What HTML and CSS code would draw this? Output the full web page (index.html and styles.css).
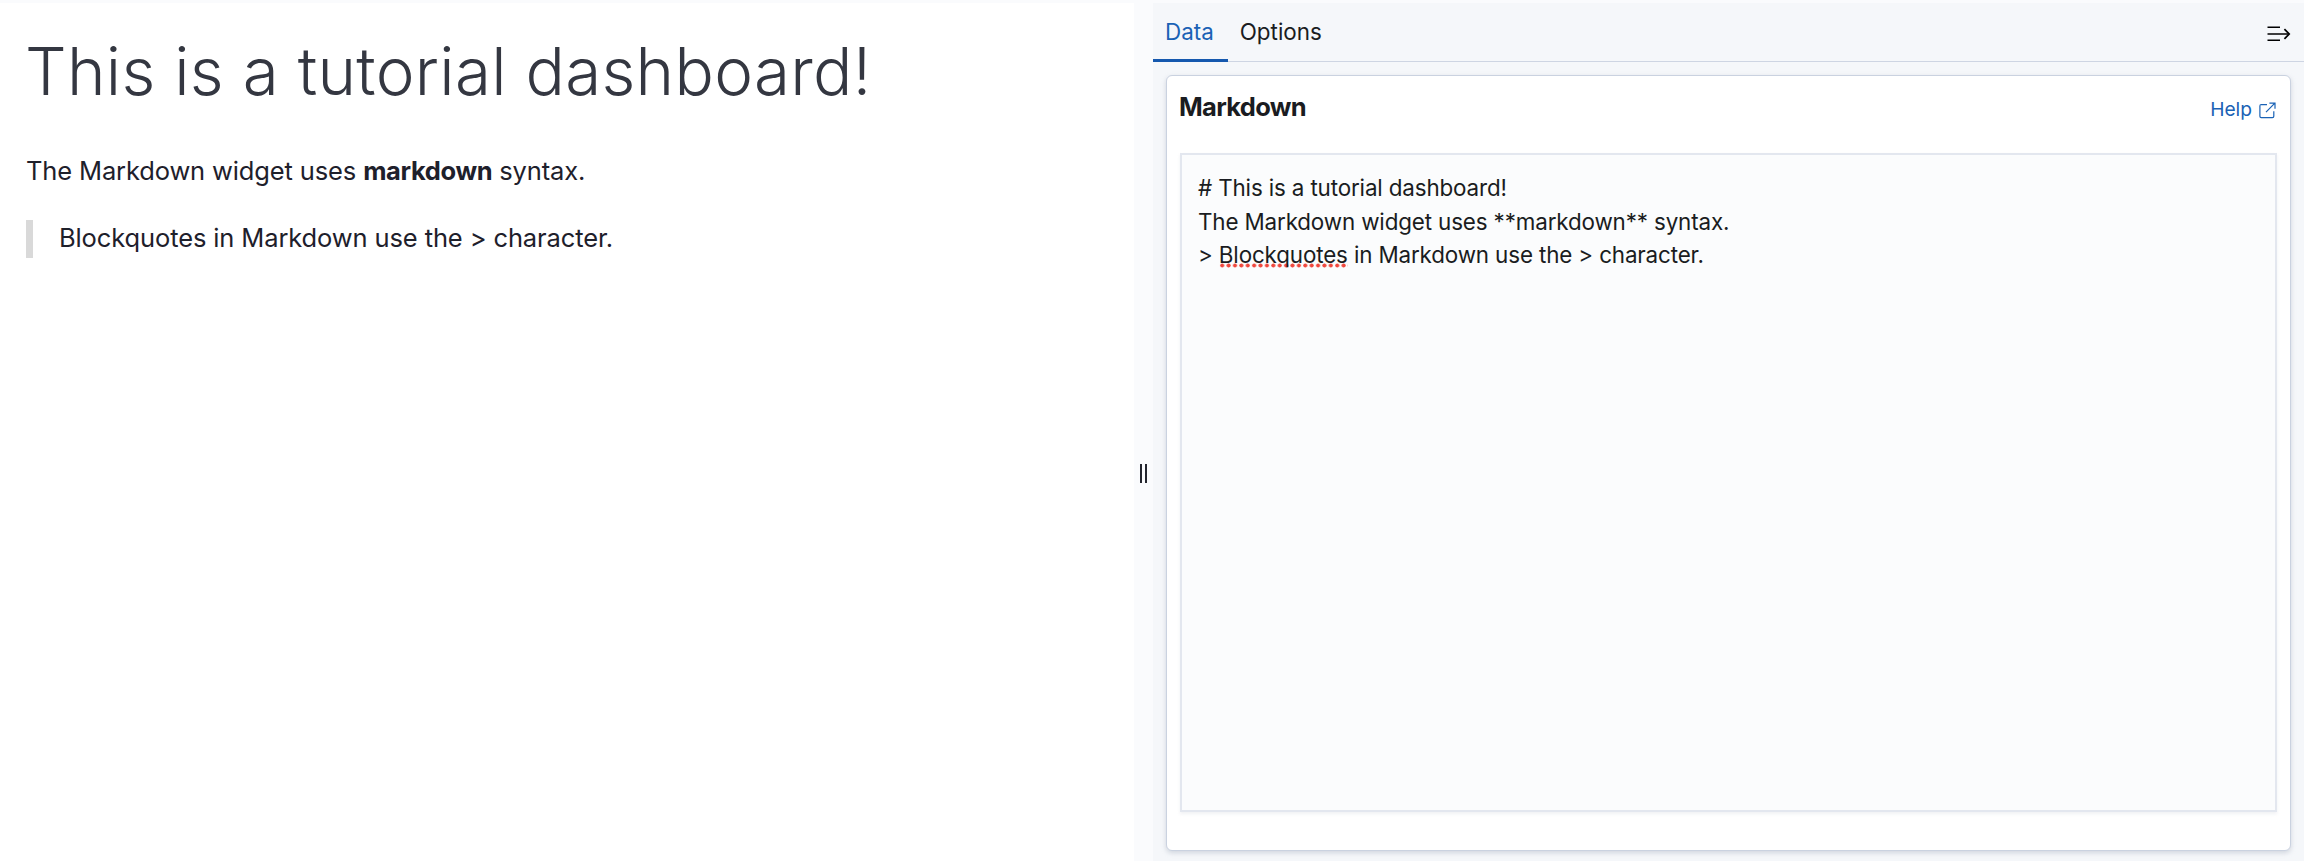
FILE: index.html
```html
<!DOCTYPE html>
<html lang="en">
<head>
<meta charset="utf-8">
<title>Markdown</title>
<link rel="stylesheet" href="styles.css">
</head>
<body>
<div class="editor">
  <main class="preview">
    <h1 class="preview-title">This is a tutorial dashboard!</h1>
    <p class="preview-text">The Markdown widget uses <strong>markdown</strong> syntax.</p>
    <blockquote class="preview-quote">Blockquotes in Markdown use the &gt; character.</blockquote>
  </main>
  <div class="resizer"><span class="grip"></span></div>
  <aside class="sidebar">
    <nav class="tabs">
      <a class="tab tab-active">Data</a>
      <a class="tab">Options</a>
      <svg class="collapse" width="24" height="18" viewBox="0 0 24 18" fill="none" stroke="#000" stroke-width="1.4"><path d="M.5 2.3h12.5M.5 9h21M.5 15.3h12.5" /><path d="M17.4 4.2 22.2 9l-4.8 4.8" stroke-width="1.7"/></svg>
    </nav>
    <section class="panel">
      <header class="panel-head">
        <h2 class="panel-title">Markdown</h2>
        <a class="help">Help
          <svg class="popout" width="17" height="17" viewBox="0 0 17 17" fill="none" stroke="#1a62b5" stroke-width="1.2"><path d="M8 2.6H2.2Q.9 2.6.9 3.9v10.3q0 1.4 1.3 1.4h11.2q1.4 0 1.4-1.4V9.2M7 10.2 15.6 1.4M10.4 1.1H16v5.6"/></svg>
        </a>
      </header>
      <div class="source"><div># This is a tutorial dashboard!</div><div>The Markdown widget uses **markdown** syntax.</div><div>&gt; <span class="misspelled">Blockquotes</span> in Markdown use the &gt; character.</div></div>
    </section>
  </aside>
</div>
</body>
</html>
```
FILE: styles.css
```css
* { box-sizing: border-box; }
body {
  margin: 0;
  background: #fafbfd;
  color: #1a1c21;
  font-family: Inter, "Liberation Sans", sans-serif;
}
.editor {
  display: grid;
  grid-template-columns: 1134px 19px 1fr;
  height: 861px;
  padding-top: 3px;
}
.preview {
  background: #fff;
  color: #343741;
  padding: 26px;
}
.preview-title {
  margin: 0 0 0 -1px;
  font-size: 65.5px;
  line-height: 86px;
  font-weight: 300;
  letter-spacing: .3px;
  white-space: nowrap;
}
.preview-text {
  margin: 37px 0 0;
  font-size: 25.5px;
  line-height: 38px;
  letter-spacing: -.14px;
  color: #1e202b;
}
.preview-text strong {
  font-weight: 700;
  letter-spacing: -.36px;
}
.preview-quote {
  margin: 30px 0 0;
  border-left: 7px solid #d9d9d9;
  padding: 0 0 2px 26px;
  font-size: 25.5px;
  line-height: 36px;
  letter-spacing: -.12px;
  color: #1e202b;
}
.resizer {
  display: flex;
  padding: 461px 0 0 6px;
}
.grip {
  width: 7px;
  height: 19px;
  border: solid #23252e;
  border-width: 0 2px;
}
.sidebar {
  display: flex;
  flex-direction: column;
  background: #f5f7fa;
  padding-bottom: 10px;
}
.tabs {
  display: flex;
  height: 59px;
  border-bottom: 1px solid #ced5e3;
}
.tab {
  height: 59px;
  padding: 0 13px 0 12px;
  font-size: 22.4px;
  line-height: 58px;
}
.tab-active {
  padding-right: 14px;
  color: #1a62b5;
  border-bottom: 3px solid #1558ae;
}
.collapse { margin: 22px 13px 0 auto; }
.panel {
  flex: 1;
  display: flex;
  flex-direction: column;
  margin: 13px 13px 0;
  padding: 13px 13px 38px;
  background: #fff;
  border: 1px solid #cad2e0;
  border-radius: 6px;
  box-shadow: 0 2px 5px rgba(152, 162, 179, .4);
}
.panel-head {
  display: flex;
  justify-content: space-between;
  height: 64px;
}
.panel-title {
  margin: 0 0 0 -1px;
  font-size: 25.5px;
  line-height: 36px;
  font-weight: 700;
  letter-spacing: -.68px;
}
.help {
  display: flex;
  gap: 7px;
  color: #1a62b5;
  font-size: 19.2px;
  line-height: 41px;
}
.popout { margin: 13px 1px 0 0; }
.source {
  flex: 1;
  border: 2px solid #e3e7ef;
  background: #fbfcfd;
  box-shadow: 0 2px 3px rgba(152, 162, 179, .15);
  padding: 16px;
  font-size: 22.4px;
  line-height: 33.6px;
  letter-spacing: -.14px;
}
.misspelled {
  background: radial-gradient(circle, #f0483e 0 1.7px, transparent 2.3px) left bottom / 6.4px 5px repeat-x;
}
```
